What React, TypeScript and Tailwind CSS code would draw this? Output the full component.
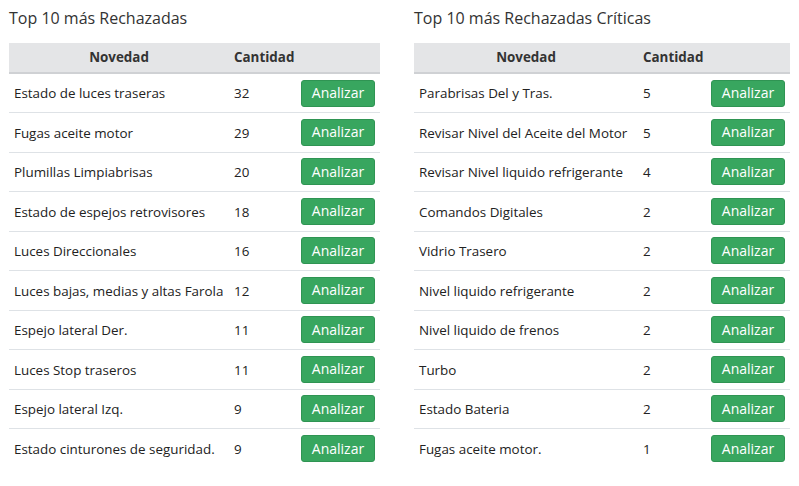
import React from "react";

type Row = { name: string; qty: number };

const rechazadas: Row[] = [
  { name: "Estado de luces traseras", qty: 32 },
  { name: "Fugas aceite motor", qty: 29 },
  { name: "Plumillas Limpiabrisas", qty: 20 },
  { name: "Estado de espejos retrovisores", qty: 18 },
  { name: "Luces Direccionales", qty: 16 },
  { name: "Luces bajas, medias y altas Farola", qty: 12 },
  { name: "Espejo lateral Der.", qty: 11 },
  { name: "Luces Stop traseros", qty: 11 },
  { name: "Espejo lateral Izq.", qty: 9 },
  { name: "Estado cinturones de seguridad.", qty: 9 },
];

const criticas: Row[] = [
  { name: "Parabrisas Del y Tras.", qty: 5 },
  { name: "Revisar Nivel del Aceite del Motor", qty: 5 },
  { name: "Revisar Nivel liquido refrigerante", qty: 4 },
  { name: "Comandos Digitales", qty: 2 },
  { name: "Vidrio Trasero", qty: 2 },
  { name: "Nivel liquido refrigerante", qty: 2 },
  { name: "Nivel liquido de frenos", qty: 2 },
  { name: "Turbo", qty: 2 },
  { name: "Estado Bateria", qty: 2 },
  { name: "Fugas aceite motor.", qty: 1 },
];

const TopTable = ({
  title,
  rows,
  tableW,
  nameW,
}: {
  title: string;
  rows: Row[];
  tableW: string;
  nameW: string;
}) => (
  <div className="flex flex-col">
    <h3 className="text-[16px] leading-[20px] text-[#333] mt-[8px] mb-[15px] ml-[9px]">
      {title}
    </h3>
    <table className={`${tableW} table-fixed ml-[9px] border-collapse text-[13.4px] text-[#222]`}>
      <thead>
        <tr className="bg-[#e4e5e7] h-[30px] border-b-2 border-[#cfd1d4]">
          <th className={`${nameW} text-center font-bold text-[#333] px-[5px]`}>Novedad</th>
          <th className="w-[67px] text-left font-bold text-[#333] px-[5px]">Cantidad</th>
          <th></th>
        </tr>
      </thead>
      <tbody>
        {rows.map((r, i) => (
          <tr key={i} className={i > 0 ? "border-t border-[#dee2e6]" : ""}>
            <td className="h-[39.5px] pl-[5px] pt-[1px] whitespace-nowrap overflow-visible">{r.name}</td>
            <td className="px-[5px] pt-[1px]">{r.qty}</td>
            <td className="px-[5px] text-right">
              <button className="h-[27px] w-[74px] rounded-[3px] bg-[#38a65f] border border-[#2f9453] text-white text-[14px] font-medium leading-none">
                Analizar
              </button>
            </td>
          </tr>
        ))}
      </tbody>
    </table>
  </div>
);

export default function App() {
  return (
    <div
      className="w-[799px] h-[486px] bg-white flex"
      style={{ fontFamily: "'Open Sans', 'Noto Sans', sans-serif" }}
    >
      <div className="w-[405px]">
        <TopTable title="Top 10 más Rechazadas" rows={rechazadas} tableW="w-[371px]" nameW="w-[220px]" />
      </div>
      <div>
        <TopTable title="Top 10 más Rechazadas Críticas" rows={criticas} tableW="w-[376px]" nameW="w-[224px]" />
      </div>
    </div>
  );
}
